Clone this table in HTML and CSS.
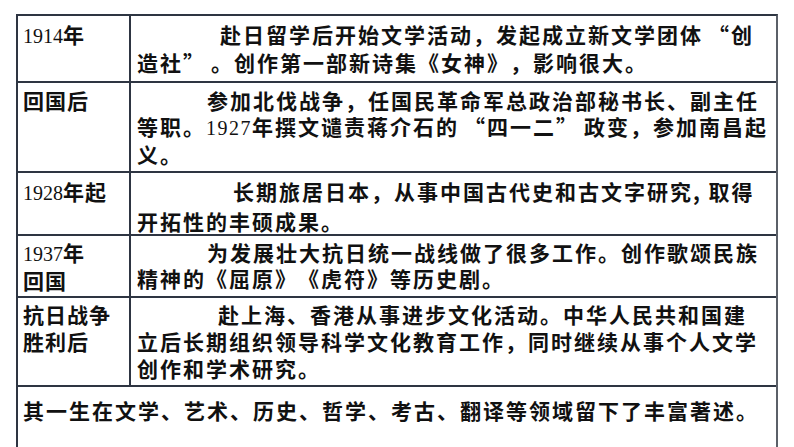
FILE: index.html
```html
<!DOCTYPE html>
<html lang="zh-CN">
<head>
<meta charset="utf-8">
<title>郭沫若生平</title>
<link rel="stylesheet" href="styles.css">
</head>
<body>
<div class="table">
  <div class="row r1">
    <div class="label"><span class="num">1914</span>年</div>
    <div class="desc">赴日留学后开始文学活动，发起成立新文学团体<span class="qo">“</span>创<br>造社<span class="qc">”</span>。创作第一部新诗集《女神》，影响很大。</div>
  </div>
  <div class="row r2">
    <div class="label">回国后</div>
    <div class="desc">参加北伐战争，任国民革命军总政治部秘书长、副主任<br>等职。<span class="num">1927</span>年撰文谴责蒋介石的<span class="qo">“</span>四一二<span class="qc">”</span>政变，参加南昌起<br>义。</div>
  </div>
  <div class="row r3">
    <div class="label"><span class="num">1928</span>年起</div>
    <div class="desc">长期旅居日本，从事中国古代史和古文字研究, 取得<br>开拓性的丰硕成果。</div>
  </div>
  <div class="row r4">
    <div class="label"><span class="num">1937</span>年<br>回国</div>
    <div class="desc">为发展壮大抗日统一战线做了很多工作。创作歌颂民族<br>精神的《屈原》《虎符》等历史剧。</div>
  </div>
  <div class="row r5">
    <div class="label">抗日战争<br>胜利后</div>
    <div class="desc">赴上海、香港从事进步文化活动。中华人民共和国建<br>立后长期组织领导科学文化教育工作，同时继续从事个人文学<br>创作和学术研究。</div>
  </div>
  <div class="row r6">
    <div class="note">其一生在文学、艺术、历史、哲学、考古、翻译等领域留下了丰富著述。</div>
  </div>
</div>
</body>
</html>
```
FILE: styles.css
```css
html, body {
  margin: 0;
  padding: 0;
  background: #ffffff;
}

body {
  width: 794px;
  height: 447px;
  overflow: hidden;
  font-family: "Noto Sans CJK SC", "Noto Sans", sans-serif;
  font-weight: 700;
  font-size: 21px;
  color: #111111;
  text-spacing-trim: space-all;
}

.table {
  margin: 14px 0 0 16px;
  width: 762px;
  box-sizing: border-box;
  border-top: 2px solid #2e3542;
  border-left: 2px solid #2e3542;
  border-right: 2px solid #5b6068;
}

.row {
  display: flex;
  box-sizing: border-box;
  border-bottom: 2px solid #2e3542;
  white-space: nowrap;
}

.label {
  width: 113px;
  flex: none;
  box-sizing: border-box;
  border-right: 2px solid #2e3542;
  padding-left: 5px;
  letter-spacing: 1px;
}

.desc {
  flex: 1;
  padding-left: 6px;
  letter-spacing: 2px;
}

.note {
  flex: 1;
  padding-left: 5px;
  padding-top: 9px;
  line-height: 28px;
  letter-spacing: 2px;
}

.num {
  font-family: "Liberation Serif", serif;
  font-weight: 400;
  font-size: 20px;
  letter-spacing: 0;
}

.desc .num {
  letter-spacing: 1.5px;
}

.qo {
  margin-left: 5px;
}

.qc {
  margin-right: 5px;
}

.r1 { height: 67px; line-height: 28px; }
.r1 .label, .r1 .desc { padding-top: 4px; }
.r1 .desc { text-indent: 83px; }

.r2 { height: 90px; line-height: 26px; }
.r2 .label, .r2 .desc { padding-top: 4px; }
.r2 .desc { text-indent: 70px; }

.r3 { height: 63px; line-height: 30px; }
.r3 .label, .r3 .desc { padding-top: 3px; }
.r3 .desc { text-indent: 96px; }

.r4 { height: 62px; line-height: 26px; }
.r4 .label, .r4 .desc { padding-top: 3px; }
.r4 .desc { text-indent: 70px; }

.r5 { height: 89px; line-height: 27px; }
.r5 .label, .r5 .desc { padding-top: 3px; }
.r5 .desc { text-indent: 81px; }

.r6 { height: 80px; border-bottom: none; }
```
